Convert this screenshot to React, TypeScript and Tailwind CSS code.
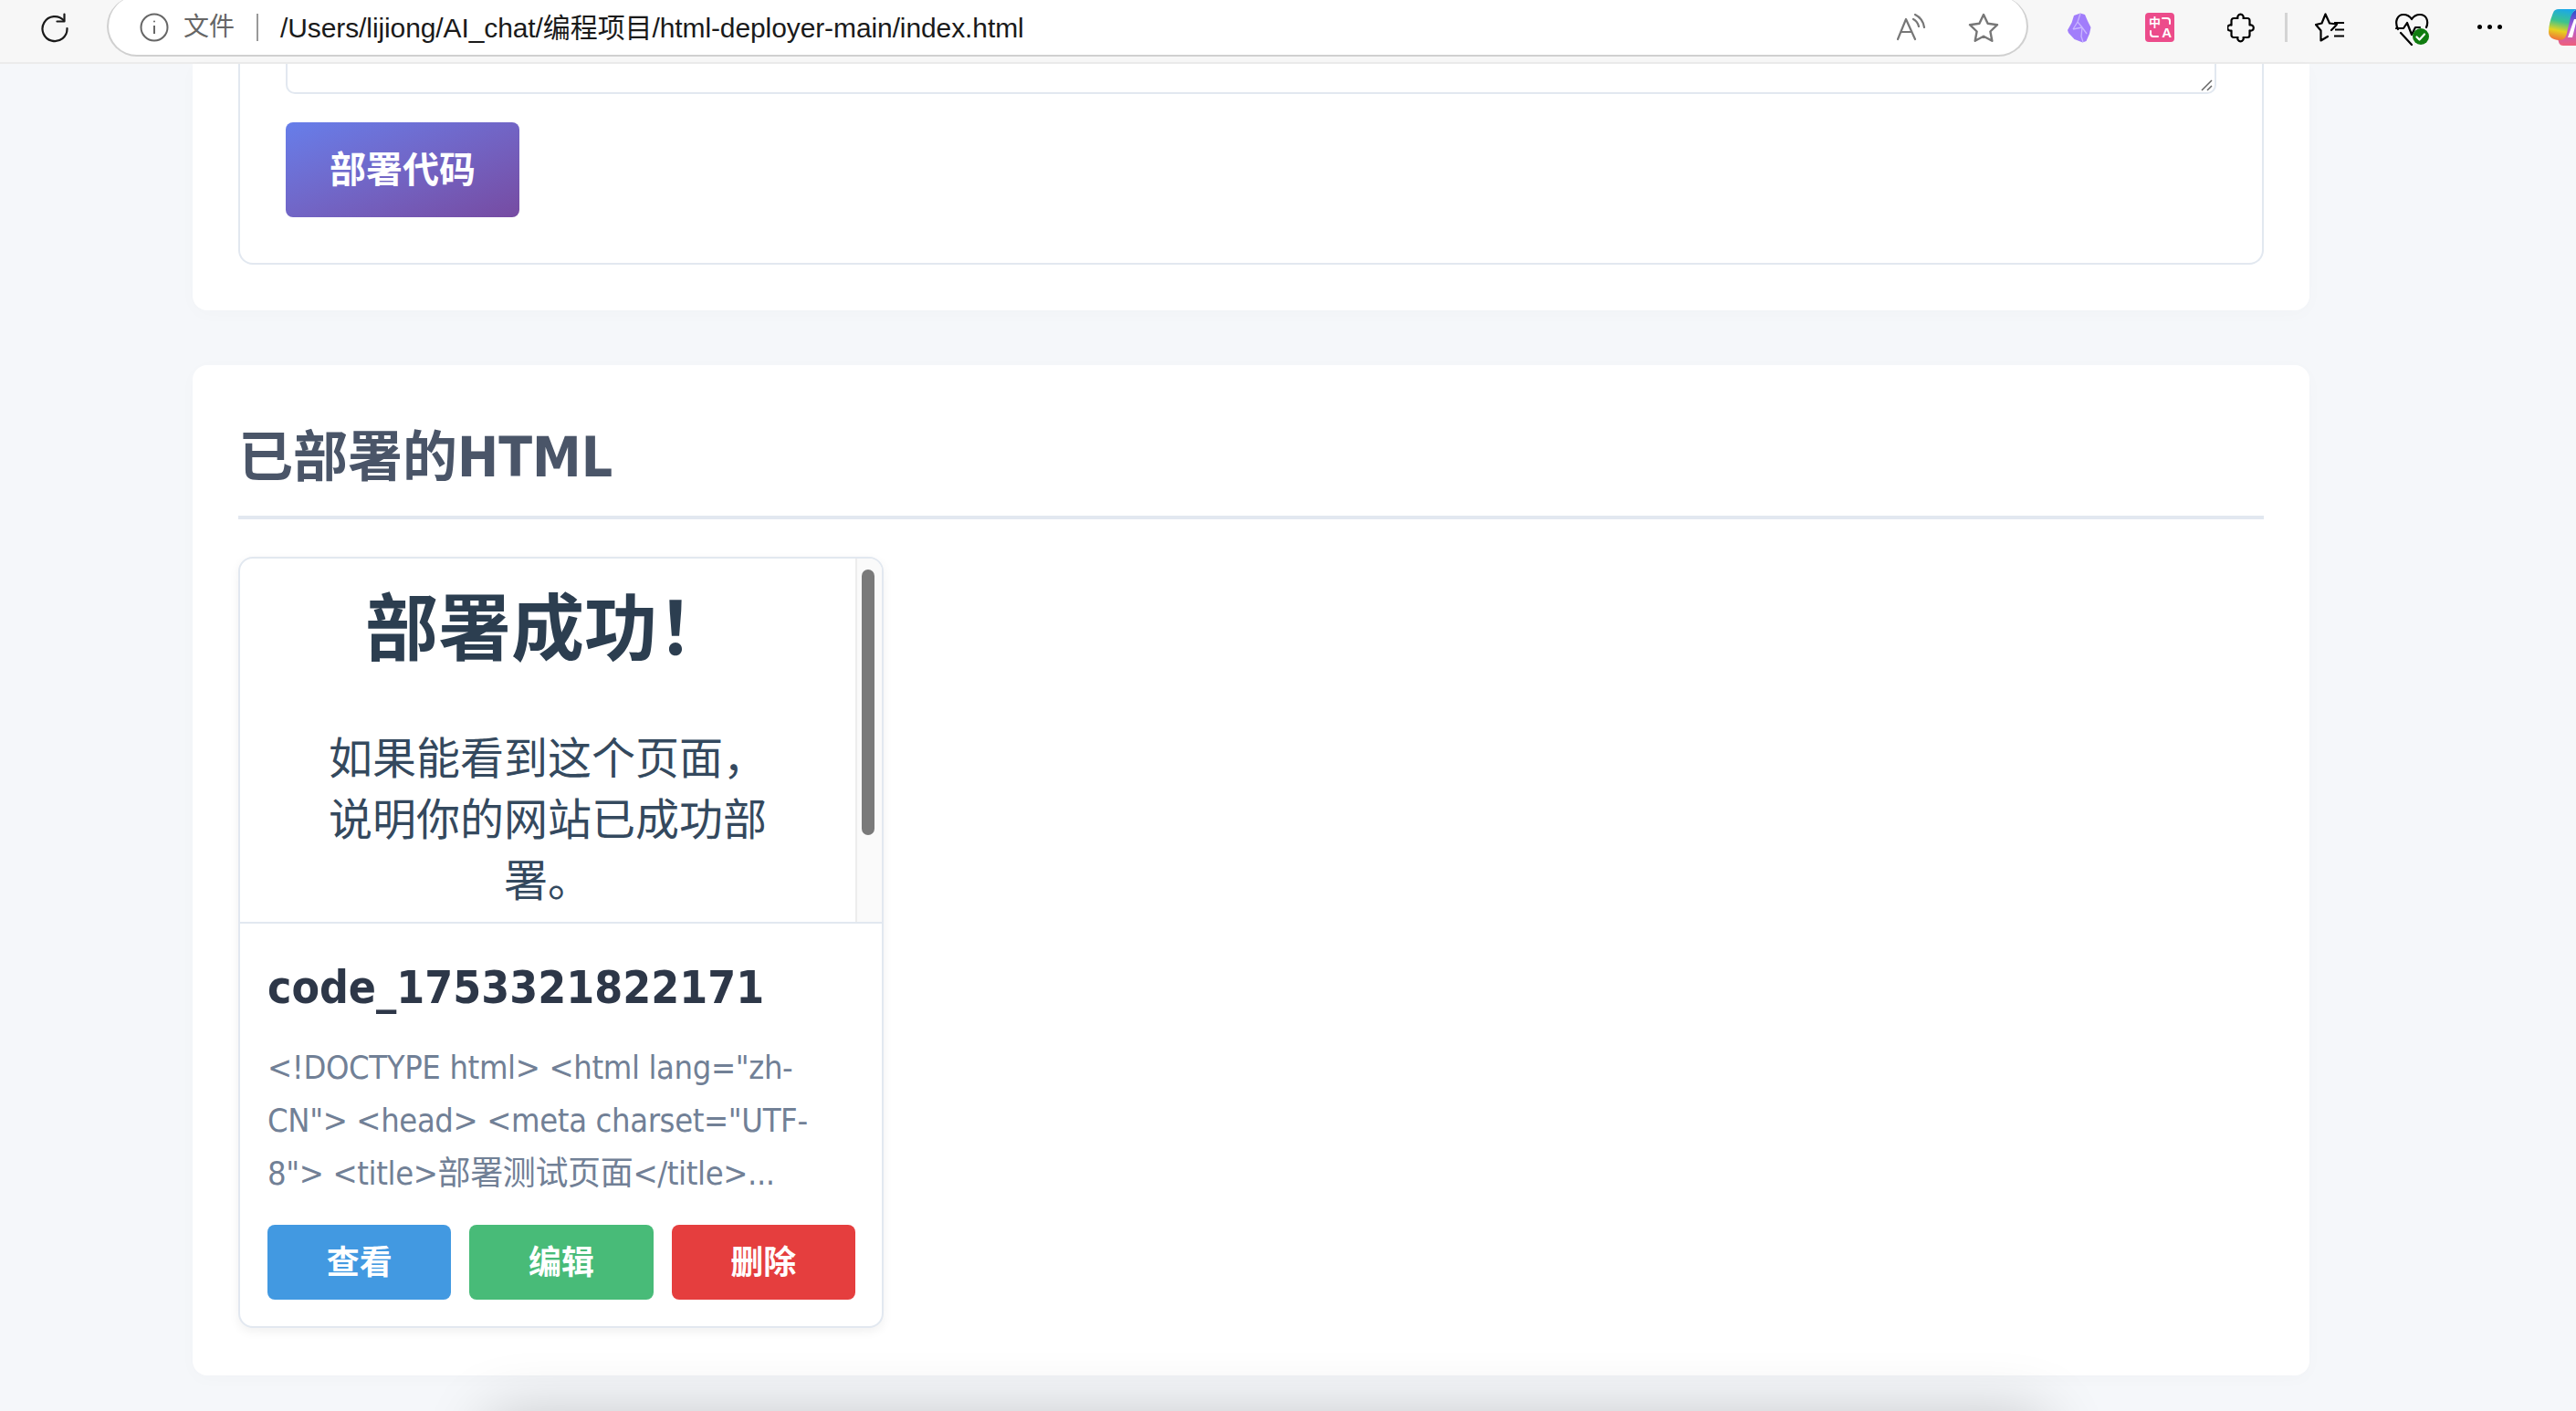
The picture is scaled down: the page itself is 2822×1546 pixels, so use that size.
import React from 'react';

const Reload = () => (
  <svg width="32" height="34" viewBox="0 0 32 34" fill="none" stroke="#1a1a1a" strokeWidth="2.2" strokeLinecap="round" strokeLinejoin="round">
    <path d="M26 9.5A13.5 13.5 0 1 0 29.5 18" />
    <path d="M26.5 2.5v8h-8" />
  </svg>
);

const Info = () => (
  <svg width="32" height="32" viewBox="0 0 32 32" fill="none" stroke="#666" strokeWidth="2">
    <circle cx="16" cy="16" r="14.5" />
    <path d="M16 14v9" />
    <circle cx="16" cy="9.5" r="1" fill="#666" stroke="none" />
  </svg>
);

const ReadAloud = () => (
  <svg width="32" height="30" viewBox="0 0 32 30" fill="none" stroke="#777" strokeWidth="2.2" strokeLinecap="round" strokeLinejoin="round">
    <path d="M1 28 10 6l10 22M4.5 20h12" />
    <path d="M18 6c3 1.5 5 4 6 8M20 1c5 2.5 9 7 10 14" />
  </svg>
);

const Star = () => (
  <svg width="34" height="32" viewBox="0 0 34 32" fill="none" stroke="#777" strokeWidth="2.4" strokeLinejoin="round">
    <path d="M17 2l4.6 9.8 10.4 1.4-7.6 7.3 1.9 10.3L17 25.8l-9.3 5 1.9-10.3L2 13.2l10.400-1.400z" />
  </svg>
);

const Obsidian = () => (
  <svg width="26" height="33" viewBox="0 0 26 33">
    <path d="M14 0.5 19 2l3 7 3.5 7-1.5 7-3.5 8-4 1.5-9-3.5L1 22l-1-3 4.5-8L7 3z" fill="#a17dfb" />
    <path d="M14 1 11 10l5 6 5 7M11 10 6 18M6 18l10-2M16 16l-1 10 2 6" fill="none" stroke="#c9b6ff" strokeWidth="1.3" />
  </svg>
);

const Translate = () => (
  <div className="relative w-[32px] h-[32px] bg-[#ec4c8b] rounded-[4px] text-white overflow-hidden">
    <span className="absolute left-[4px] top-[4px] text-[13px] leading-[14px] font-bold">中</span>
    <span className="absolute right-[3px] bottom-[3px] text-[15px] leading-[15px] font-bold font-['Liberation_Sans',sans-serif]">A</span>
    <svg className="absolute inset-0" width="32" height="32" viewBox="0 0 32 32" fill="none" stroke="#fff" strokeWidth="2" strokeLinecap="round">
      <path d="M19 6h5a3 3 0 0 1 3 3v3" />
      <path d="M6 20v3a3 3 0 0 0 3 3h5" />
    </svg>
  </div>
);

const Puzzle = () => (
  <svg width="30" height="33" viewBox="0 0 30 33" fill="none" stroke="#000" strokeWidth="2.2" strokeLinejoin="round">
    <path d="M7 6H11.5A3.2 3.2 0 1 1 17.5 6H22a2.5 2.5 0 0 1 2.5 2.5V13.5A3.2 3.2 0 1 1 24.5 19.5V24.5a2.5 2.5 0 0 1-2.5 2.5H17.5A3.2 3.2 0 1 1 11.5 27H7a2.5 2.5 0 0 1-2.5-2.5V19.5A3.2 3.2 0 1 1 4.5 13.5V8.5A2.5 2.5 0 0 1 7 6z" />
  </svg>
);

const Favorites = () => (
  <svg width="33" height="33" viewBox="0 0 33 33" fill="none" stroke="#000" strokeWidth="2.2" strokeLinejoin="round" strokeLinecap="round">
    <path d="M18 19 22 15 24 12.5 16 11.500 11.500 1.500 7.500 11.500 1 13l5.500 6.500L6.500 30.500 14 26" />
    <path d="M21 11h11M22 18.5h10M21 25.5h11" strokeLinecap="butt" />
  </svg>
);

const Health = () => (
  <svg width="38" height="36" viewBox="0 0 38 36" fill="none">
    <path d="M3 18C-1 10 2 2 9 2c4 0 7 2 9 5 2-3 5-5 9-5 7 0 10 7 7 14M1 17h8l4-6 5 13 4-8h5M6 22l12 13" stroke="#000" strokeWidth="2.2" strokeLinecap="round" strokeLinejoin="round" />
    <circle cx="28" cy="26" r="9" fill="#107c10" />
    <path d="M23.5 26.5l3 3 5.5-6" stroke="#fff" strokeWidth="2.2" fill="none" strokeLinecap="round" strokeLinejoin="round" />
  </svg>
);

const Copilot = () => (
  <svg width="42" height="42" viewBox="0 0 42 42">
    <defs>
      <linearGradient id="copA" x1="0.5" y1="0" x2="0.3" y2="1">
        <stop offset="0" stopColor="#1ba8e8" />
        <stop offset="0.4" stopColor="#3cc48e" />
        <stop offset="0.7" stopColor="#e6d21f" />
        <stop offset="1" stopColor="#f0703a" />
      </linearGradient>
      <linearGradient id="copB" x1="0.5" y1="0" x2="0.5" y2="1">
        <stop offset="0" stopColor="#1f4fc8" />
        <stop offset="0.5" stopColor="#b05bd8" />
        <stop offset="1" stopColor="#f0607a" />
      </linearGradient>
    </defs>
    <path d="M34 1c5 0 8 4 8 9v22c0 6-4 9-9 9H16c-4 0-5-3-6-8l13-22c2-6 5-10 11-10z" fill="url(#copB)" />
    <path d="M11 1h23c-6 0-8 4-10 9l-4 17c-1 5-3 8-8 8-7 0-12-3-12-9C0 18 3 10 5 5c1-3 3-4 6-4z" fill="url(#copA)" />
    <path d="M28 12h3l-5 20h-5z" fill="#fff" />
  </svg>
);

const ActionButton = ({ label, color }: { label: string; color: string }) => (
  <button className={`flex-1 h-[82px] pt-[2px] rounded-[8px] text-white text-[36px] font-bold ${color}`}>{label}</button>
);

export default function App() {
  return (
    <div className="relative w-[2822px] h-[1546px] overflow-hidden bg-[#f5f7fa] font-['DejaVu_Sans_Condensed','DejaVu_Sans','Noto_Sans_CJK_SC',sans-serif]">
      {/* browser toolbar */}
      <div className="flex items-start h-[70px] bg-[#f7f7f7] border-b-2 border-[#ebebeb] font-['Liberation_Sans','Noto_Sans_CJK_SC',sans-serif]">
        <div className="ml-[44px] mt-[13px]"><Reload /></div>
        <div className="ml-[41px] -mt-[4px] w-[2105px] h-[66px] bg-white rounded-[44px] border-2 border-t-0 border-[#d0d0d0] flex items-center pl-[34px] pt-[4px] shrink-0">
          <Info />
          <span className="ml-[16px] text-[28px] text-[#666]">文件</span>
          <div className="ml-[24px] w-[2px] h-[30px] bg-[#999]" />
          <span className="ml-[24px] text-[30px] tracking-[-0.1px] text-[#1a1a1a] whitespace-nowrap">/Users/lijiong/AI_chat/编程项目/html-deployer-main/index.html</span>
          <div className="ml-auto flex items-center">
            <ReadAloud />
            <div className="ml-[46px] mr-[30px]"><Star /></div>
          </div>
        </div>
        <div className="flex items-start mt-[14px] shrink-0">
          <div className="ml-[43px]"><Obsidian /></div>
          <div className="ml-[59px]"><Translate /></div>
          <div className="ml-[58px]"><Puzzle /></div>
          <div className="ml-[33px] w-[3px] h-[32px] bg-[#d4d4d4]" />
          <div className="ml-[30px]"><Favorites /></div>
          <div className="ml-[55px]"><Health /></div>
          <div className="ml-[52px] mt-[13px] flex gap-[6px]">
            <span className="w-[5px] h-[5px] rounded-full bg-black" />
            <span className="w-[5px] h-[5px] rounded-full bg-black" />
            <span className="w-[5px] h-[5px] rounded-full bg-black" />
          </div>
          <div className="ml-[51px] -mt-[5px]"><Copilot /></div>
        </div>
      </div>

      <main className="px-[211px] w-[2741px]">
        {/* form panel, scrolled so only its end shows */}
        <section className="bg-white rounded-b-[16px] px-[50px] pb-[50px] shadow-[0_4px_20px_rgba(0,0,0,0.02)]">
          <div className="border-2 border-t-0 border-[#e2e8f0] rounded-b-[16px] pl-[50px] pr-[50px] pb-[50px]">
            <div className="relative h-[33px] border-2 border-t-0 border-[#e2e8f0] rounded-b-[10px]">
              <svg className="absolute right-[1px] bottom-[1px]" width="14" height="14" viewBox="0 0 14 14" stroke="#666" strokeWidth="1.5" fill="none">
                <path d="M1 13 12 2M7 13l5-5" />
              </svg>
            </div>
            <button className="mt-[31px] w-[256px] h-[104px] rounded-[8px] bg-gradient-to-br from-[#667eea] to-[#764ba2] text-white text-[40px] font-bold">部署代码</button>
          </div>
        </section>

        {/* deployed list */}
        <section className="mt-[60px] bg-white rounded-[16px] px-[50px] pt-[50px] pb-[52px] shadow-[0_4px_20px_rgba(0,0,0,0.02)]">
          <h2 className="h-[119px] border-b-4 border-[#e2e8f0] text-[60px] leading-[102px] font-bold text-[#4a5568]">已部署的HTML</h2>
          <div className="mt-[41px] w-[707px] h-[845px] bg-white border-2 border-[#e2e8f0] rounded-[16px] overflow-hidden shadow-[0_4px_12px_rgba(0,0,0,0.06)]">
            <div className="flex h-[400px] border-b-2 border-[#e2e8f0] text-center font-['Noto_Sans_CJK_SC',sans-serif]">
              <div className="flex-1 overflow-hidden">
                <h1 className="mt-[16px] text-[80px] leading-[108px] font-bold text-[#2c3e50]">部署成功！</h1>
                <p className="mt-[58px] mx-auto w-[500px] text-[48px] leading-[67px] text-[#34495e]">如果能看到这个页面，说明你的网站已成功部署。</p>
              </div>
              <div className="w-[29px] bg-[#fafafa] border-l-2 border-[#ededed] pt-[12px] pl-[5px]">
                <div className="w-[14px] h-[291px] rounded-full bg-[#7a7a7a]" />
              </div>
            </div>
            <div className="pl-[30px] pr-[29px] pt-[34px]">
              <h3 className="text-[49.5px] leading-[72px] font-bold text-[#2d3748]">code_1753321822171</h3>
              <p className="mt-[23px] text-[36px] leading-[58px] tracking-[-0.36px] text-[#718096]">
                &lt;!DOCTYPE html&gt; &lt;html lang="zh-<br />
                CN"&gt; &lt;head&gt; &lt;meta charset="UTF-<br />
                8"&gt; &lt;title&gt;部署测试页面&lt;/title&gt;...
              </p>
              <div className="mt-[27px] flex gap-[20px]">
                <ActionButton label="查看" color="bg-[#4299e1]" />
                <ActionButton label="编辑" color="bg-[#48bb78]" />
                <ActionButton label="删除" color="bg-[#e53e3e]" />
              </div>
            </div>
          </div>
        </section>
      </main>

      {/* shadow of a window sitting just under the visible area */}
      <div className="absolute left-[575px] w-[1625px] top-[1590px] h-[40px] pointer-events-none shadow-[0_0_70px_40px_rgba(0,0,0,0.2)]" />
    </div>
  );
}
